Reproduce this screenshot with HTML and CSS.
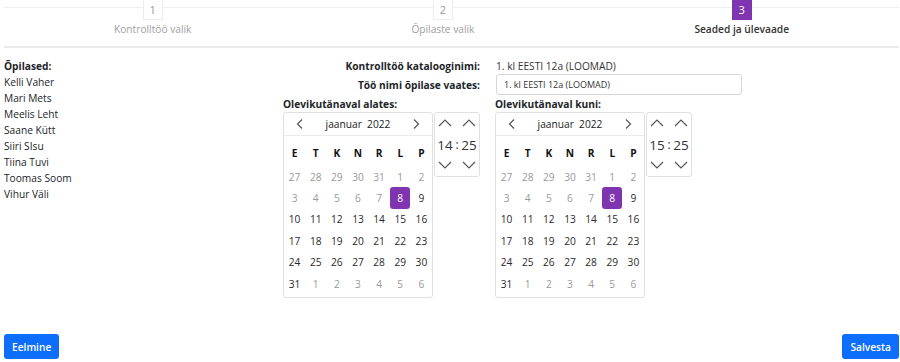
FILE: index.html
```html
<!DOCTYPE html>
<html lang="et">
<head>
    <meta charset="UTF-8">
    <meta name="viewport" content="width=device-width, initial-scale=1.0">
    <title>Kontrolltöö seaded</title>
    <link rel="stylesheet" href="styles.css">
</head>
<body>
    <div class="page">
        <div class="stepper">
            <div class="step">
                <span class="step-num">1</span>
                <div class="step-label">Kontrolltöö valik</div>
            </div>
            <div class="step">
                <span class="step-num">2</span>
                <div class="step-label">Õpilaste valik</div>
            </div>
            <div class="step active">
                <span class="step-num">3</span>
                <div class="step-label">Seaded ja ülevaade</div>
            </div>
        </div>

        <div class="content">
            <div class="students">
                <div class="students-title">Õpilased:</div>
                <div>Kelli Vaher</div>
                <div>Mari Mets</div>
                <div>Meelis Leht</div>
                <div>Saane Kütt</div>
                <div>Siiri SIsu</div>
                <div>Tiina Tuvi</div>
                <div>Toomas Soom</div>
                <div>Vihur Väli</div>
            </div>

            <div class="settings">
                <div class="info-grid">
                    <div class="info-label">Kontrolltöö katalooginimi:</div>
                    <div class="info-value">1. kl EESTI 12a (LOOMAD)</div>
                    <div class="info-label">Töö nimi õpilase vaates:</div>
                    <div><input class="name-input" type="text" value="1. kl EESTI 12a (LOOMAD)"></div>
                </div>

                <div class="pickers">
                    <div class="picker">
                        <div class="picker-title">Olevikutänaval alates:</div>
                        <div class="picker-body">
                            <div class="calendar">
                                <div class="cal-head">
                                    <svg class="nav" width="8" height="10" viewBox="0 0 8 10"><polyline points="6,0.5 1.5,5 6,9.5"/></svg>
                                    <span class="month">jaanuar&nbsp;&nbsp;2022</span>
                                    <svg class="nav" width="8" height="10" viewBox="0 0 8 10"><polyline points="2,0.5 6.5,5 2,9.5"/></svg>
                                </div>
                                <div class="weekdays"><span>E</span><span>T</span><span>K</span><span>N</span><span>R</span><span>L</span><span>P</span></div>
                                <div class="days">
                                    <span class="muted">27</span><span class="muted">28</span><span class="muted">29</span><span class="muted">30</span><span class="muted">31</span><span class="muted">1</span><span class="muted">2</span>
                                    <span class="muted">3</span><span class="muted">4</span><span class="muted">5</span><span class="muted">6</span><span class="muted">7</span><span class="selected">8</span><span>9</span>
                                    <span>10</span><span>11</span><span>12</span><span>13</span><span>14</span><span>15</span><span>16</span>
                                    <span>17</span><span>18</span><span>19</span><span>20</span><span>21</span><span>22</span><span>23</span>
                                    <span>24</span><span>25</span><span>26</span><span>27</span><span>28</span><span>29</span><span>30</span>
                                    <span>31</span><span class="muted">1</span><span class="muted">2</span><span class="muted">3</span><span class="muted">4</span><span class="muted">5</span><span class="muted">6</span>
                                </div>
                            </div>
                            <div class="time">
                                <svg class="arrow" width="14" height="8" viewBox="0 0 14 8"><polyline points="1,7 7,1 13,7"/></svg>
                                <span></span>
                                <svg class="arrow" width="14" height="8" viewBox="0 0 14 8"><polyline points="1,7 7,1 13,7"/></svg>
                                <span class="digits">14</span>
                                <span class="colon">:</span>
                                <span class="digits">25</span>
                                <svg class="arrow" width="14" height="8" viewBox="0 0 14 8"><polyline points="1,1 7,7 13,1"/></svg>
                                <span></span>
                                <svg class="arrow" width="14" height="8" viewBox="0 0 14 8"><polyline points="1,1 7,7 13,1"/></svg>
                            </div>
                        </div>
                    </div>

                    <div class="picker">
                        <div class="picker-title">Olevikutänaval kuni:</div>
                        <div class="picker-body">
                            <div class="calendar">
                                <div class="cal-head">
                                    <svg class="nav" width="8" height="10" viewBox="0 0 8 10"><polyline points="6,0.5 1.5,5 6,9.5"/></svg>
                                    <span class="month">jaanuar&nbsp;&nbsp;2022</span>
                                    <svg class="nav" width="8" height="10" viewBox="0 0 8 10"><polyline points="2,0.5 6.5,5 2,9.5"/></svg>
                                </div>
                                <div class="weekdays"><span>E</span><span>T</span><span>K</span><span>N</span><span>R</span><span>L</span><span>P</span></div>
                                <div class="days">
                                    <span class="muted">27</span><span class="muted">28</span><span class="muted">29</span><span class="muted">30</span><span class="muted">31</span><span class="muted">1</span><span class="muted">2</span>
                                    <span class="muted">3</span><span class="muted">4</span><span class="muted">5</span><span class="muted">6</span><span class="muted">7</span><span class="selected">8</span><span>9</span>
                                    <span>10</span><span>11</span><span>12</span><span>13</span><span>14</span><span>15</span><span>16</span>
                                    <span>17</span><span>18</span><span>19</span><span>20</span><span>21</span><span>22</span><span>23</span>
                                    <span>24</span><span>25</span><span>26</span><span>27</span><span>28</span><span>29</span><span>30</span>
                                    <span>31</span><span class="muted">1</span><span class="muted">2</span><span class="muted">3</span><span class="muted">4</span><span class="muted">5</span><span class="muted">6</span>
                                </div>
                            </div>
                            <div class="time">
                                <svg class="arrow" width="14" height="8" viewBox="0 0 14 8"><polyline points="1,7 7,1 13,7"/></svg>
                                <span></span>
                                <svg class="arrow" width="14" height="8" viewBox="0 0 14 8"><polyline points="1,7 7,1 13,7"/></svg>
                                <span class="digits">15</span>
                                <span class="colon">:</span>
                                <span class="digits">25</span>
                                <svg class="arrow" width="14" height="8" viewBox="0 0 14 8"><polyline points="1,1 7,7 13,1"/></svg>
                                <span></span>
                                <svg class="arrow" width="14" height="8" viewBox="0 0 14 8"><polyline points="1,1 7,7 13,1"/></svg>
                            </div>
                        </div>
                    </div>
                </div>
            </div>
        </div>

        <div class="footer">
            <button class="btn">Eelmine</button>
            <button class="btn">Salvesta</button>
        </div>
    </div>
</body>
</html>
```

FILE: styles.css
```css
:root {
    --text-color: #212529;
    --muted-color: #9a9a9a;
    --line-color: #ebebeb;
    --border-color: #e0e0e0;
    --purple: #7f35b0;
    --blue: #0d6efd;
}

body {
    margin: 0;
    font-family: 'Open Sans', 'Noto Sans', sans-serif;
    font-size: 10.2px;
    line-height: 16px;
    color: var(--text-color);
    background: #fff;
}

.page {
    height: 100vh;
    box-sizing: border-box;
    display: flex;
    flex-direction: column;
    padding: 0 1px 3px 4px;
}

/* stepper */
.stepper {
    display: flex;
    border-bottom: 2px solid var(--line-color);
    padding-bottom: 9px;
}

.step {
    flex: 1 1 auto;
    text-align: center;
    background: linear-gradient(#efefef, #efefef) 0 7px / 100% 1px no-repeat;
}

.step-num {
    display: inline-block;
    width: 18px;
    height: 19px;
    line-height: 19px;
    border: 1px solid #ededed;
    border-top: none;
    background: #fff;
    color: #999;
    font-size: 11px;
}

.step-label {
    margin-top: 1px;
    color: #a0a0a0;
}

.step.active .step-num {
    background: var(--purple);
    border-color: var(--purple);
    color: #fff;
}

.step.active .step-label {
    color: #333;
    font-weight: 600;
}

/* content */
.content {
    display: flex;
    padding-top: 10px;
}

.students {
    width: 279px;
    flex-shrink: 0;
}

.students-title {
    font-weight: 700;
}

.info-grid {
    display: grid;
    grid-template-columns: 197px 1fr;
    column-gap: 16px;
    align-items: center;
}

.info-label {
    text-align: right;
    font-weight: 700;
}

.info-value {
    color: #333;
}

.name-input {
    display: block;
    width: 246px;
    height: 21px;
    box-sizing: border-box;
    border: 1px solid #d6d6d6;
    border-radius: 3px;
    padding: 0 7px;
    font-family: inherit;
    font-size: 9px;
    color: #333;
    margin: 0;
}

.pickers {
    display: flex;
    margin-top: 1px;
}

.picker {
    width: 212px;
}

.picker-title {
    font-weight: 700;
}

.picker-body {
    display: flex;
    align-items: flex-start;
    margin-top: 0;
}

/* calendar */
.calendar {
    width: 150px;
    box-sizing: border-box;
    border: 1px solid var(--border-color);
    border-radius: 3px;
    padding-bottom: 3px;
}

.cal-head {
    height: 22px;
    display: flex;
    align-items: center;
    justify-content: space-between;
    padding: 0 12px 0 12px;
    border-bottom: 1px solid var(--line-color);
}

.nav polyline,
.arrow polyline {
    fill: none;
    stroke: #555;
    stroke-width: 1.2;
}

.month {
    color: #222;
}

.weekdays,
.days {
    display: grid;
    grid-template-columns: repeat(7, 1fr);
    text-align: center;
}

.weekdays {
    height: 26px;
    padding-top: 4px;
    align-items: center;
    font-weight: 700;
    color: #111;
}

.days {
    grid-auto-rows: 21.4px;
}

.days span {
    display: flex;
    align-items: center;
    justify-content: center;
    color: #2a2a2a;
}

.days .muted {
    color: var(--muted-color);
}

.days .selected {
    background: var(--purple);
    color: #fff;
    border-radius: 3px;
    margin: 0 0.5px;
}

/* time */
.time {
    margin-left: 1px;
    width: 46px;
    box-sizing: border-box;
    border: 1px solid var(--border-color);
    border-radius: 3px;
    display: grid;
    grid-template-columns: 20px 4px 20px;
    grid-template-rows: 20px 24px 16px;
    padding: 0 0 3px 0;
    align-items: center;
    justify-items: center;
}

.time .arrow {
    display: block;
}

.digits {
    font-size: 13.5px;
    color: #333;
}

.colon {
    font-size: 12px;
    color: #333;
}

/* footer */
.footer {
    margin-top: auto;
    display: flex;
    justify-content: space-between;
}

.btn {
    height: 25px;
    padding: 0 8px;
    border: none;
    border-radius: 3px;
    background: var(--blue);
    color: #fff;
    font-family: inherit;
    font-size: 10.2px;
    font-weight: 600;
    cursor: pointer;
}
```
